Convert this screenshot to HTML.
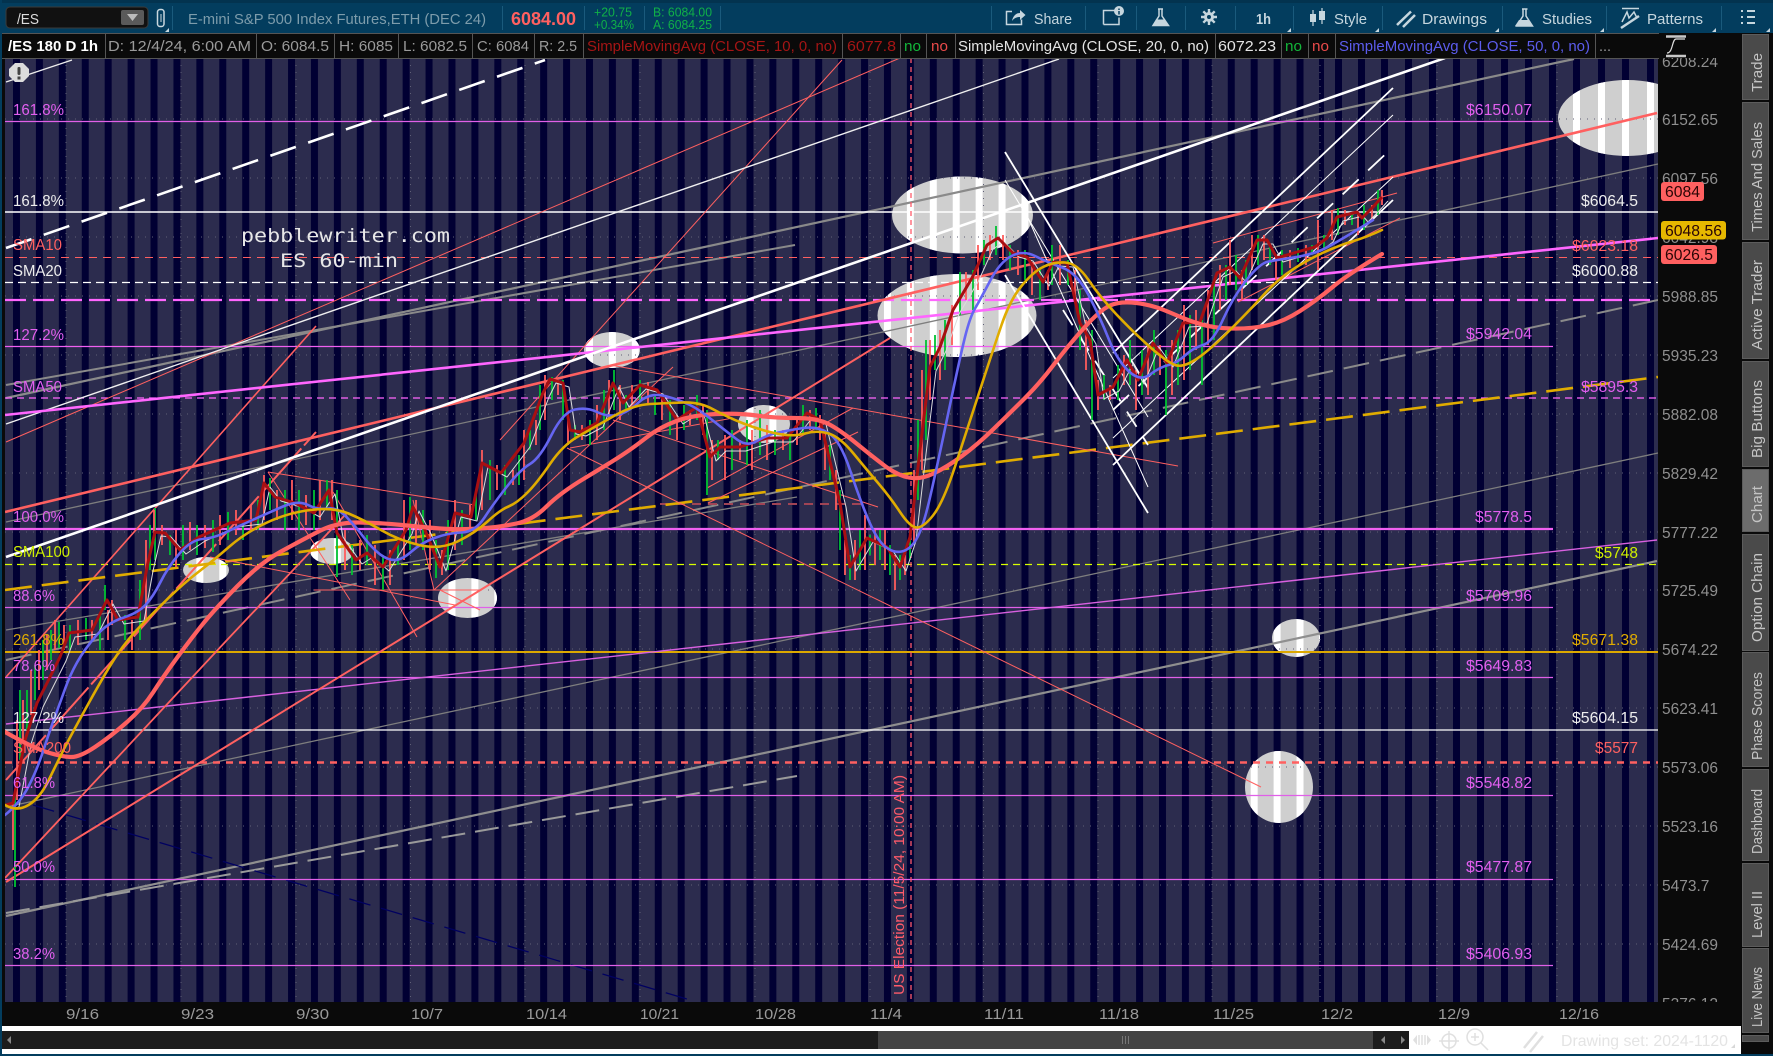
<!DOCTYPE html>
<html>
<head>
<meta charset="utf-8">
<title>/ES chart</title>
<style>
html,body{margin:0;padding:0;background:#033b5a;width:1773px;height:1056px;overflow:hidden}
svg{display:block;position:absolute;left:0;top:0}
text{font-family:"Liberation Sans","DejaVu Sans",sans-serif}
.m{font-size:15.5px;fill:#e25ff0}
.w{font-size:15.5px;fill:#eee}
.r{font-size:15.5px;fill:#ff6060}
.a{font-size:15.5px;fill:#8f8f8f}
.l{font-size:14.5px;fill:#9a9a9a}
.d{font-size:15px;fill:#9a9a9a}
.t{font-size:15px;fill:#c6d6de}
.v{font-size:15px;fill:#c4c4c4}
.tag{font-size:15.5px;fill:#2b0505}
</style>
</head>
<body>
<svg xmlns="http://www.w3.org/2000/svg" width="1773" height="1056" viewBox="0 0 1773 1056">
<defs>
<pattern id="pn" x="13" y="0" width="22.92" height="20" patternUnits="userSpaceOnUse"><rect width="7" height="20" fill="#010033"/></pattern>
<pattern id="pw" x="13" y="0" width="22.92" height="20" patternUnits="userSpaceOnUse"><rect width="7" height="20" fill="#fff"/></pattern>
<path id="rs" d="M1319 58h5v944h-5zM1335 58h7v944h-7zM1358 58h7v944h-7zM1381 58h7v944h-7zM1405 58h7v944h-7zM1429 58h7v944h-7zM1453 58h7v944h-7zM1477 58h7v944h-7zM1501 58h7v944h-7zM1525 58h7v944h-7zM1549 58h7v944h-7zM1573 58h7v944h-7zM1598 58h7v944h-7zM1622 58h7v944h-7zM1647 58h7v944h-7z"/>
<clipPath id="cc"><rect x="5" y="58" width="1653" height="944"/></clipPath>
<clipPath id="ce">
<ellipse cx="962.5" cy="215" rx="70.5" ry="38.5"/>
<ellipse cx="957" cy="315.5" rx="79.5" ry="41.5"/>
<ellipse cx="1627" cy="118" rx="69" ry="38"/>
<ellipse cx="612" cy="350" rx="28" ry="18"/>
<ellipse cx="764" cy="424" rx="26" ry="19"/>
<ellipse cx="206" cy="570" rx="23" ry="13"/>
<ellipse cx="332" cy="551" rx="22" ry="13"/>
<ellipse cx="467.5" cy="598" rx="29.5" ry="20"/>
<ellipse cx="1296" cy="638" rx="24" ry="19"/>
<ellipse cx="1279" cy="787" rx="34" ry="36"/>
</clipPath>
<polyline id="dr" fill="none" stroke-linejoin="round" points="6,805 13,803 25,740 37,703 60,657 69,633 92,630 107,600 118,620 138,617 147,567 155,532 165,533 180,550 199,537 230,523 256,520 264,483 275,497 295,503 314,513 329,490 337,533 356,560 367,553 383,567 406,530 413,507 425,530 440,567 455,513 471,517 482,463 501,473 524,443 543,393 550,379 563,383 570,430 580,432 597,423 613,383 623,403 640,385 657,390 677,420 697,407 710,457 720,447 740,447 767,438 787,438 807,413 820,420 840,503 850,567 867,538 887,547 900,567 910,537 920,450 930,367 940,347 953,310 972,278 987,245 998,238 1013,253 1027,257 1043,282 1053,262 1067,263 1080,323 1090,340 1098,395 1113,387 1127,360 1138,380 1153,343 1167,363 1183,323 1200,322 1217,273 1230,267 1240,278 1257,240 1267,240 1277,258 1297,252 1315,247 1327,238 1337,217 1357,212 1362,218 1373,207 1382,197"/>
</defs>

<!-- base -->
<rect width="1773" height="1056" fill="#033b5a"/>
<rect x="2" y="33" width="1771" height="993" fill="#0a0a0a"/>

<!-- chart background -->
<rect x="5" y="58" width="1653" height="944" fill="#2c2c4e"/>
<rect x="5" y="58" width="1305" height="944" fill="url(#pn)"/>
<use href="#rs" fill="#010033"/>

<g clip-path="url(#cc)">
<!-- ellipses -->
<g clip-path="url(#ce)">
<rect x="5" y="58" width="1653" height="944" fill="#cfcfcf"/>
<rect x="5" y="58" width="1305" height="944" fill="url(#pw)"/>
<use href="#rs" fill="#fff"/>
</g>

<!-- grid -->
<g stroke="#5f5f76" stroke-width="1" stroke-dasharray="1 6" fill="none">
<path d="M5 119H1658M5 178H1658M5 237H1658M5 296H1658M5 355H1658M5 414H1658M5 473H1658M5 532H1658M5 590H1658M5 649H1658M5 708H1658M5 767H1658M5 826H1658M5 885H1658M5 944H1658"/>
<path d="M66 58V1002M181 58V1002M296 58V1002M410.5 58V1002M525 58V1002M640 58V1002M755 58V1002M870 58V1002M983.5 58V1002M1098 58V1002M1212 58V1002M1320 58V1002M1437 58V1002M1557 58V1002"/>
</g>

<!-- thin gray / long lines -->
<g fill="none">
<path d="M6 522L1658 164" stroke="#7e7e7e" stroke-width="1.3"/>
<path d="M6 807L1658 453" stroke="#7e7e7e" stroke-width="1.3"/>
<path d="M6 630L797 497" stroke="#7e7e7e" stroke-width="1.3"/>
<path d="M6 398L1574 59" stroke="#8a8a8a" stroke-width="2.2"/>
<path d="M6 385L795 245" stroke="#8a8a8a" stroke-width="2"/>
<path d="M6 916L1657 561" stroke="#8f8f8f" stroke-width="2.2"/>
<path d="M6 660L1658 300" stroke="#8a8a8a" stroke-width="2" stroke-dasharray="26 11"/>
<path d="M6 913L797 776" stroke="#9a9a9a" stroke-width="2" stroke-dasharray="24 10"/>
<path d="M33 805L697 1002" stroke="#000060" stroke-width="1.3" stroke-dasharray="22 11"/>

<!-- horizontal levels -->
<path d="M5 121.5H1553" stroke="#e060e8" stroke-width="1.2"/>
<path d="M5 212H1658" stroke="#fff" stroke-width="1.5"/>
<path d="M5 257.5H1658" stroke="#ff6060" stroke-width="1" stroke-dasharray="8 6"/>
<path d="M5 282.5H1658" stroke="#fff" stroke-width="1.2" stroke-dasharray="8 5"/>
<path d="M5 300H1650" stroke="#ff66ff" stroke-width="2.2" stroke-dasharray="21 7"/>
<path d="M5 346.5H1553" stroke="#f060f0" stroke-width="1.3"/>
<path d="M5 398H1658" stroke="#ff66ff" stroke-width="1.2" stroke-dasharray="7 5"/>
<path d="M5 529H1553" stroke="#f060f0" stroke-width="2.2"/>
<path d="M5 564.5H1658" stroke="#d8ff00" stroke-width="1.2" stroke-dasharray="7 5"/>
<path d="M5 607.5H1553" stroke="#e060e8" stroke-width="1.2"/>
<path d="M5 652H1658" stroke="#dca800" stroke-width="2"/>
<path d="M5 677.5H1553" stroke="#e060e8" stroke-width="1.2"/>
<path d="M5 730H1658" stroke="#fff" stroke-width="1.3"/>
<path d="M5 762.5H1658" stroke="#ff6060" stroke-width="2.6" stroke-dasharray="7 6"/>
<path d="M5 795.5H1553" stroke="#e060e8" stroke-width="1.2"/>
<path d="M5 879.5H1553" stroke="#e060e8" stroke-width="1.2"/>
<path d="M5 965.5H1553" stroke="#e060e8" stroke-width="1.2"/>
<path d="M911 58V1002" stroke="#ff5a6a" stroke-width="1.3" stroke-dasharray="5 4"/>
<path d="M660 504H867" stroke="#a04455" stroke-width="2" stroke-dasharray="9 7"/>

<!-- long diagonal lines -->
<path d="M6 724L1657 540" stroke="#d860e0" stroke-width="1.4"/>
<path d="M6 442L900 58" stroke="#ff6060" stroke-width="1"/>
<path d="M842 60L500 440" stroke="#ff6060" stroke-width="1"/>
<path d="M6 424L1059 59" stroke="#f0f0f0" stroke-width="1.4"/>
<path d="M6 677L316 326" stroke="#ff6060" stroke-width="1.6"/>
<path d="M6 780L316 432" stroke="#ff6060" stroke-width="2" stroke-dasharray="60 4"/>
<path d="M5 878L227 640L345 515" stroke="#ff6060" stroke-width="1.8"/>
<path d="M6 882L890 338" stroke="#ff6060" stroke-width="2"/>
<path d="M5 512L1657 113" stroke="#ff6060" stroke-width="2.6"/>
<path d="M5 415L1658 238" stroke="#ff66ff" stroke-width="2.6"/>
<path d="M5 590L1658 377" stroke="#e0ac00" stroke-width="2.6" stroke-dasharray="27 10"/>
<path d="M6 557L1445 58" stroke="#fff" stroke-width="2.6"/>
<path d="M6 248L545 60" stroke="#fff" stroke-width="2.6" stroke-dasharray="27 13"/>
<path d="M6 82L72 60" stroke="#eee" stroke-width="1.2"/>

<!-- thin salmon fan -->
<g stroke="#ff6060" stroke-width="1">
<path d="M610 365L1178 466"/>
<path d="M613 420L878 507"/>
<path d="M567 448L1261 787"/>
<path d="M707 488L853 408"/>
<path d="M708 503L858 432"/>
<path d="M570 448L733 418"/>
<path d="M268 472L475 505"/>
<path d="M333 492L417 637"/>
<path d="M210 557L455 605"/>
<path d="M314 590H482"/>
<path d="M434 590L413 500"/>
<path d="M434 590L673 367"/>
<path d="M268 472L350 600"/>
<path d="M440 590L480 610"/>
<path d="M1213 243L1397 193"/>
<path d="M1238 302L1400 218"/>
</g>

<!-- white channels -->
<g stroke="#fff">
<path d="M1005 152L1148 388" stroke-width="1.8"/>
<path d="M1005 180L1148 417" stroke-width="1"/>
<path d="M1005 275L1148 513" stroke-width="1.8"/>
<path d="M1028 218L1148 487" stroke-width="1"/>
<path d="M1063 310L1148 445" stroke-width="1.8" stroke-dasharray="18 12"/>
<path d="M1113 353L1393 88" stroke-width="1.8"/>
<path d="M1113 378L1393 115" stroke-width="1"/>
<path d="M1113 410L1392 148" stroke-width="1.8" stroke-dasharray="22 13"/>
<path d="M1113 438L1393 177" stroke-width="1"/>
<path d="M1113 465L1393 200" stroke-width="1.8"/>
</g>
</g>

<!-- candles green -->
<path fill="none" stroke="#00c232" stroke-width="1.8" d="M15 887V790M20 760V690M27 730V690M35 700V665M43 680V640M51 660V630M59 648V622M70 650V625M86 640V618M100 650V615M105 610V585M125 640V615M140 640V580M150 570V525M155 508V560M170 535V555M183 525V560M197 525V555M213 520V552M228 512V540M243 520V540M258 500V530M270 478V510M285 490V530M299 490V530M314 490V530M327 480V510M337 490V577M352 545V575M367 535V565M383 555V590M398 540V565M410 497V550M423 510V550M436 540V578M448 520V570M462 510V545M476 490V520M490 460V500M505 465V495M519 455V485M530 430V450M540 385V430M552 377V400M563 380V420M575 425V440M590 420V445M604 390V430M614 370V410M626 395V410M640 380V400M655 395V415M670 400V435M684 405V430M697 395V420M707 410V495M718 440V460M732 430V470M747 420V465M760 410V455M775 430V455M790 435V460M803 405V435M816 408V430M830 445V480M840 490V550M850 555V580M860 530V570M870 535V555M880 530V560M890 545V575M900 555V580M910 530V560M918 420V500M926 340V440M935 335V370M945 320V370M960 272V315M973 270V310M984 240V265M996 226V255M1010 245V270M1025 250V280M1040 270V300M1052 245V285M1068 260V285M1080 290V350M1092 330V420M1104 375V400M1118 365V400M1130 340V385M1142 350V395M1154 330V375M1166 350V415M1178 330V385M1190 315V370M1202 320V385M1214 280V340M1226 265V300M1236 255V290M1246 260V285M1258 235V265M1270 245V265M1282 250V275M1298 248V262M1312 245V255M1324 235V250M1338 208V235M1352 212V225M1364 205V230M1378 190V215"/>
<!-- candles red -->
<path fill="none" stroke="#ff5c5c" stroke-width="1.8" d="M13 850V800M17 800V720M23 740V700M31 715V670M39 690V650M47 670V635M55 650V620M64 650V625M78 645V620M92 640V620M108 640V610M112 625V600M132 650V620M146 620V540M154 540V510M162 525V545M176 530V567M190 522V550M205 525V548M220 515V545M236 510V535M251 505V530M264 475V520M277 490V520M292 480V520M306 495V525M320 480V520M332 480V520M345 530V570M360 540V570M375 545V585M390 550V585M404 500V560M416 500V545M430 520V570M442 550V575M455 500V550M470 505V530M482 450V510M497 465V490M513 470V485M524 430V480M536 420V445M545 375V420M558 380V395M568 410V445M582 425V440M597 405V440M609 380V420M620 385V420M632 385V405M648 382V405M662 395V420M677 415V440M690 410V425M703 405V435M712 440V480M725 435V480M740 440V460M752 430V470M767 425V460M783 430V450M797 420V445M810 410V430M820 415V440M825 430V470M836 470V510M845 540V575M855 540V580M865 515V570M875 530V565M885 530V570M895 555V590M905 555V575M914 470V545M922 370V470M930 340V400M940 330V380M952 305V345M966 272V300M978 245V290M990 235V260M1003 235V260M1018 250V275M1032 262V295M1048 270V290M1060 245V285M1075 270V300M1086 320V370M1098 380V410M1110 385V400M1124 355V385M1136 370V410M1148 345V395M1160 345V375M1172 340V395M1184 305V380M1196 310V350M1208 290V345M1220 265V310M1230 240V285M1242 270V300M1252 235V270M1264 235V260M1276 255V280M1290 250V268M1306 245V265M1318 220V270M1332 210V240M1345 210V225M1358 212V235M1372 205V220M1382 190V205"/>

<use href="#dr" stroke="#dcdcdc" stroke-width="1" transform="translate(6 4)"/>
<use href="#dr" stroke="#a80f12" stroke-width="3"/>
<path fill="none" stroke="#ff6060" stroke-width="4.2" stroke-linecap="round" d="M5 732Q33 748 48 752.5Q63 757 71.5 757Q80 757 95 747Q110 737 126.5 722.5Q143 708 153 692.5Q163 677 176.5 658.5Q190 640 202 625Q214 610 237 586.5Q260 563 281 551.5Q302 540 319.5 531Q337 522 360 522.5Q383 523 402 525Q421 527 440 528.5Q459 530 479.5 528.5Q500 527 516.5 523.5Q533 520 546.5 506.5Q560 493 585 478Q610 463 621.5 455.5Q633 448 646.5 437.5Q660 427 676.5 421Q693 415 716.5 414Q740 413 756.5 415.5Q773 418 795 418Q817 418 828.5 424Q840 430 856.5 443.5Q873 457 885 466Q897 475 908.5 477.5Q920 480 933.5 473.5Q947 467 962 456Q977 445 993.5 429Q1010 413 1025 398Q1040 383 1053.5 365Q1067 347 1083.5 328.5Q1100 310 1110 305.5Q1120 301 1136.5 303Q1153 305 1170 312.5Q1187 320 1200 324Q1213 328 1231.5 328.5Q1250 329 1266.5 325.5Q1283 322 1300 311Q1317 300 1332 287.5Q1347 275 1382 254"/>
<path fill="none" stroke="#6565f2" stroke-width="2.6" stroke-linecap="round" d="M5 815Q20 803 28.5 786.5Q37 770 43.5 750Q50 730 55 716.5Q60 703 65 689Q70 675 77 662.5Q84 650 95.5 636.5Q107 623 122.5 618Q138 613 145.5 605Q153 597 160.5 582Q168 567 179.5 553.5Q191 540 202.5 539Q214 538 225.5 532.5Q237 527 252.5 520Q268 513 283 506.5Q298 500 308 505Q318 510 327.5 508.5Q337 507 346.5 517Q356 527 363.5 537Q371 547 379 553.5Q387 560 394.5 560Q402 560 411.5 551.5Q421 543 434.5 538Q448 533 461.5 532.5Q475 532 484.5 517.5Q494 503 507 486.5Q520 470 530 464Q540 458 551.5 435Q563 412 575 409.5Q587 407 597 412Q607 417 617 415Q627 413 638.5 402.5Q650 392 665 396Q680 400 690 405Q700 410 713.5 421Q727 432 737 439.5Q747 447 757 441Q767 435 778.5 432.5Q790 430 803.5 428Q817 426 828.5 433Q840 440 850 470Q860 500 868.5 520Q877 540 885 546.5Q893 553 901.5 551.5Q910 550 916.5 539Q923 528 930 497.5Q937 467 948.5 412Q960 357 965 337Q970 317 975 308.5Q980 300 990 281Q1000 262 1011.5 256Q1023 250 1035 256Q1047 262 1062 267.5Q1077 273 1088.5 295Q1100 317 1108.5 338.5Q1117 360 1128.5 371Q1140 382 1150 374.5Q1160 367 1168.5 365Q1177 363 1185 355.5Q1193 348 1203 345Q1213 342 1223 319.5Q1233 297 1246.5 280Q1260 263 1268.5 261.5Q1277 260 1293.5 257.5Q1310 255 1321.5 250Q1333 245 1373 220"/>
<path fill="none" stroke="#e0ac00" stroke-width="2.6" stroke-linecap="round" d="M5 805Q17 812 28.5 805Q40 798 48.5 780.5Q57 763 63.5 750Q70 737 88.5 703.5Q107 670 117 655Q127 640 140 626.5Q153 613 168.5 598Q184 583 199 571.5Q214 560 229.5 546.5Q245 533 266 523Q287 513 310 510Q333 507 348.5 513.5Q364 520 381 530Q398 540 419 545Q440 550 457.5 541.5Q475 533 487.5 521.5Q500 510 508.5 506.5Q517 503 527 493Q537 483 550 464Q563 445 578 436.5Q593 428 613 416.5Q633 405 650 404Q667 403 683.5 402.5Q700 402 713.5 409.5Q727 417 743.5 423.5Q760 430 776.5 433.5Q793 437 805 433.5Q817 430 828.5 433.5Q840 437 853.5 453.5Q867 470 878.5 483.5Q890 497 900 512Q910 527 916.5 527.5Q923 528 933 515.5Q943 503 955 466.5Q967 430 980 390Q993 350 1001.5 325Q1010 300 1021.5 286Q1033 272 1043 267Q1053 262 1065 262.5Q1077 263 1088.5 280Q1100 297 1116.5 314.5Q1133 332 1150 347Q1167 362 1175 365Q1183 368 1196.5 359Q1210 350 1230 330Q1250 310 1263.5 295Q1277 280 1292 270Q1307 260 1323.5 252.5Q1340 245 1353.5 241Q1367 237 1382 230"/>

<!-- alert icon -->
<path d="M15 63h8l6 6v7l-6 6h-8l-6-6v-7z" fill="#dcdcdc"/>
<rect x="17.5" y="67" width="3" height="8" rx="1.2" fill="#444"/><rect x="17.5" y="76.5" width="3" height="3" fill="#444"/>

<!-- left labels -->
<text class="m" x="13" y="115" textLength="51" lengthAdjust="spacingAndGlyphs">161.8%</text>
<text class="w" x="13" y="206" textLength="51" lengthAdjust="spacingAndGlyphs">161.8%</text>
<text class="r" x="13" y="250" textLength="49" lengthAdjust="spacingAndGlyphs">SMA10</text>
<text class="w" x="13" y="276" textLength="49" lengthAdjust="spacingAndGlyphs">SMA20</text>
<text class="m" x="13" y="340" textLength="51" lengthAdjust="spacingAndGlyphs">127.2%</text>
<text class="m" x="13" y="392" textLength="49" lengthAdjust="spacingAndGlyphs">SMA50</text>
<text class="m" x="13" y="522" textLength="51" lengthAdjust="spacingAndGlyphs">100.0%</text>
<text x="13" y="557" textLength="57" lengthAdjust="spacingAndGlyphs" font-size="15.5" fill="#d0f000">SMA100</text>
<text class="m" x="13" y="601" textLength="42" lengthAdjust="spacingAndGlyphs">88.6%</text>
<text x="13" y="645" textLength="51" lengthAdjust="spacingAndGlyphs" font-size="15.5" fill="#e0ac00">261.8%</text>
<text class="m" x="13" y="671" textLength="42" lengthAdjust="spacingAndGlyphs">78.6%</text>
<text class="w" x="13" y="723" textLength="51" lengthAdjust="spacingAndGlyphs">127.2%</text>
<text class="r" x="13" y="753" textLength="58" lengthAdjust="spacingAndGlyphs">SMA200</text>
<text class="m" x="13" y="788" textLength="42" lengthAdjust="spacingAndGlyphs">61.8%</text>
<text class="m" x="13" y="872" textLength="42" lengthAdjust="spacingAndGlyphs">50.0%</text>
<text class="m" x="13" y="959" textLength="42" lengthAdjust="spacingAndGlyphs">38.2%</text>

<!-- right labels -->
<text class="m" x="1466" y="115" textLength="66" lengthAdjust="spacingAndGlyphs">$6150.07</text>
<text class="m" x="1466" y="339" textLength="66" lengthAdjust="spacingAndGlyphs">$5942.04</text>
<text class="m" x="1475" y="522" textLength="57" lengthAdjust="spacingAndGlyphs">$5778.5</text>
<text class="m" x="1466" y="601" textLength="66" lengthAdjust="spacingAndGlyphs">$5709.96</text>
<text class="m" x="1466" y="671" textLength="66" lengthAdjust="spacingAndGlyphs">$5649.83</text>
<text class="m" x="1466" y="788" textLength="66" lengthAdjust="spacingAndGlyphs">$5548.82</text>
<text class="m" x="1466" y="872" textLength="66" lengthAdjust="spacingAndGlyphs">$5477.87</text>
<text class="m" x="1466" y="959" textLength="66" lengthAdjust="spacingAndGlyphs">$5406.93</text>
<text class="w" x="1581" y="206" textLength="57" lengthAdjust="spacingAndGlyphs">$6064.5</text>
<text class="r" x="1572" y="251" textLength="66" lengthAdjust="spacingAndGlyphs">$6023.18</text>
<text class="w" x="1572" y="276" textLength="66" lengthAdjust="spacingAndGlyphs">$6000.88</text>
<text class="m" x="1581" y="392" textLength="57" lengthAdjust="spacingAndGlyphs">$5895.3</text>
<text x="1595" y="558" textLength="43" lengthAdjust="spacingAndGlyphs" font-size="15.5" fill="#d0f000">$5748</text>
<text x="1572" y="645" textLength="66" lengthAdjust="spacingAndGlyphs" font-size="15.5" fill="#e0ac00">$5671.38</text>
<text class="w" x="1572" y="723" textLength="66" lengthAdjust="spacingAndGlyphs">$5604.15</text>
<text class="r" x="1595" y="753" textLength="43" lengthAdjust="spacingAndGlyphs">$5577</text>

<!-- watermark text -->
<text x="241" y="242" textLength="209" lengthAdjust="spacingAndGlyphs" font-size="19" fill="#e8e8e8" style="font-family:'DejaVu Sans Mono','Liberation Mono',monospace">pebblewriter.com</text>
<text x="280" y="267" textLength="118" lengthAdjust="spacingAndGlyphs" font-size="19" fill="#e8e8e8" style="font-family:'DejaVu Sans Mono','Liberation Mono',monospace">ES 60-min</text>
<text transform="translate(904 995) rotate(-90)" textLength="220" lengthAdjust="spacingAndGlyphs" font-size="14.5" fill="#ff5a6a">US Election (11/5/24, 10:00 AM)</text>

<!-- chart borders -->
<path d="M4.5 58V1002.5H1658.5V58" fill="none" stroke="#6a6a6a" stroke-width="1"/>
</svg>

<svg xmlns="http://www.w3.org/2000/svg" width="1773" height="1056" viewBox="0 0 1773 1056">
<defs>
<clipPath id="ca"><rect x="1659" y="58" width="82" height="944"/></clipPath>
</defs>
<!-- price axis -->
<g clip-path="url(#ca)">
<text class="a" x="1662" y="67">6208.24</text>
<text class="a" x="1662" y="125">6152.65</text>
<text class="a" x="1662" y="184">6097.56</text>
<text class="a" x="1662" y="243">6042.98</text>
<text class="a" x="1662" y="302">5988.85</text>
<text class="a" x="1662" y="361">5935.23</text>
<text class="a" x="1662" y="420">5882.08</text>
<text class="a" x="1662" y="479">5829.42</text>
<text class="a" x="1662" y="538">5777.22</text>
<text class="a" x="1662" y="596">5725.49</text>
<text class="a" x="1662" y="655">5674.22</text>
<text class="a" x="1662" y="714">5623.41</text>
<text class="a" x="1662" y="773">5573.06</text>
<text class="a" x="1662" y="832">5523.16</text>
<text class="a" x="1662" y="891">5473.7</text>
<text class="a" x="1662" y="950">5424.69</text>
<text class="a" x="1662" y="1009">5376.12</text>
</g>
<rect x="1661" y="182" width="43" height="19" rx="3" fill="#ff6060"/>
<text class="tag" x="1665" y="197" textLength="35" lengthAdjust="spacingAndGlyphs">6084</text>
<rect x="1661" y="221" width="65" height="18.5" rx="3" fill="#e6b800"/>
<text class="tag" x="1665" y="236" textLength="57" lengthAdjust="spacingAndGlyphs">6048.56</text>
<rect x="1661" y="245" width="56" height="19" rx="3" fill="#ff6060"/>
<text class="tag" x="1665" y="260" textLength="48" lengthAdjust="spacingAndGlyphs">6026.5</text>

<!-- date axis -->
<text class="d" x="66" y="1019" textLength="33" lengthAdjust="spacingAndGlyphs">9/16</text>
<text class="d" x="181" y="1019" textLength="33" lengthAdjust="spacingAndGlyphs">9/23</text>
<text class="d" x="296" y="1019" textLength="33" lengthAdjust="spacingAndGlyphs">9/30</text>
<text class="d" x="411" y="1019" textLength="32" lengthAdjust="spacingAndGlyphs">10/7</text>
<text class="d" x="526" y="1019" textLength="41" lengthAdjust="spacingAndGlyphs">10/14</text>
<text class="d" x="640" y="1019" textLength="39" lengthAdjust="spacingAndGlyphs">10/21</text>
<text class="d" x="755" y="1019" textLength="41" lengthAdjust="spacingAndGlyphs">10/28</text>
<text class="d" x="870" y="1019" textLength="32" lengthAdjust="spacingAndGlyphs">11/4</text>
<text class="d" x="984" y="1019" textLength="40" lengthAdjust="spacingAndGlyphs">11/11</text>
<text class="d" x="1099" y="1019" textLength="40" lengthAdjust="spacingAndGlyphs">11/18</text>
<text class="d" x="1213" y="1019" textLength="41" lengthAdjust="spacingAndGlyphs">11/25</text>
<text class="d" x="1321" y="1019" textLength="32" lengthAdjust="spacingAndGlyphs">12/2</text>
<text class="d" x="1438" y="1019" textLength="32" lengthAdjust="spacingAndGlyphs">12/9</text>
<text class="d" x="1559" y="1019" textLength="40" lengthAdjust="spacingAndGlyphs">12/16</text>

<!-- bottom strip -->
<rect x="2" y="1026" width="1739" height="28" fill="#fff"/>
<rect x="2" y="1031" width="1407" height="18" fill="#1c1c1c"/>
<rect x="878" y="1031" width="495" height="18" fill="#444"/>
<path d="M1122.5 1036v8M1125.5 1036v8M1128.5 1036v8" stroke="#777" stroke-width="1"/>
<path d="M7 1040l4-4v8zM1381 1040l4-4v8zM1401 1036l4 4-4 4z" fill="#888"/>
<g fill="none" stroke="#e0e0e0" stroke-width="1.5">
<path d="M1413 1040l4-5v10zM1431 1040l-4-5v10z" fill="#e0e0e0" stroke="none"/>
<path d="M1419 1035v10M1422 1035v10M1425 1035v10"/>
<circle cx="1449" cy="1041" r="7"/><path d="M1449 1031v20M1439 1041h20"/>
<circle cx="1475" cy="1037" r="8"/><path d="M1481 1043l7 7M1475 1033v8M1471 1037h8"/>
<path d="M1524 1048l13-16M1530 1052l13-16" stroke-width="2.5"/>
</g>
<text x="1561" y="1046" font-size="16" fill="#e4e4e4" textLength="167" lengthAdjust="spacingAndGlyphs">Drawing set: 2024-1120</text>
<path d="M1731 1048l4-4v4z" fill="#d8d8d8"/>

<!-- right tabs -->
<rect x="1741" y="33" width="32" height="1021" fill="#0a0a0a"/>
<g fill="#4a4a4a" stroke="#5c5c5c" stroke-width="1">
<rect x="1742.5" y="34.5" width="26" height="65"/>
<rect x="1742.5" y="102.5" width="26" height="137"/>
<rect x="1742.5" y="242.5" width="26" height="116"/>
<rect x="1742.5" y="361.5" width="26" height="105"/>
<rect x="1742.5" y="469.5" width="26" height="62" fill="#6c6c6c"/>
<rect x="1742.5" y="534.5" width="26" height="116"/>
<rect x="1742.5" y="652.5" width="26" height="114"/>
<rect x="1742.5" y="769.5" width="26" height="91"/>
<rect x="1742.5" y="863.5" width="26" height="83"/>
<rect x="1742.5" y="948.5" width="26" height="84"/>
<rect x="1742.5" y="1035.5" width="26" height="6"/>
</g>
<text class="v" transform="translate(1762 92) rotate(-90)" textLength="39" lengthAdjust="spacingAndGlyphs">Trade</text>
<text class="v" transform="translate(1762 232) rotate(-90)" textLength="110" lengthAdjust="spacingAndGlyphs">Times And Sales</text>
<text class="v" transform="translate(1762 350) rotate(-90)" textLength="90" lengthAdjust="spacingAndGlyphs">Active Trader</text>
<text class="v" transform="translate(1762 458) rotate(-90)" textLength="78" lengthAdjust="spacingAndGlyphs">Big Buttons</text>
<text class="v" transform="translate(1762 523) rotate(-90)" textLength="37" lengthAdjust="spacingAndGlyphs">Chart</text>
<text class="v" transform="translate(1762 642) rotate(-90)" textLength="89" lengthAdjust="spacingAndGlyphs">Option Chain</text>
<text class="v" transform="translate(1762 760) rotate(-90)" textLength="88" lengthAdjust="spacingAndGlyphs">Phase Scores</text>
<text class="v" transform="translate(1762 854) rotate(-90)" textLength="65" lengthAdjust="spacingAndGlyphs">Dashboard</text>
<text class="v" transform="translate(1762 938) rotate(-90)" textLength="47" lengthAdjust="spacingAndGlyphs">Level II</text>
<text class="v" transform="translate(1762 1027) rotate(-90)" textLength="60" lengthAdjust="spacingAndGlyphs">Live News</text>

<!-- legend row -->
<rect x="2" y="33" width="1657" height="25" fill="#0a0a0a"/>
<path d="M2 33.5H1659M2 58.5H1659" stroke="#555" stroke-width="1"/>
<path d="M105.5 33V58M256.5 33V58M334.5 33V58M398.5 33V58M472.5 33V58M534.5 33V58M583.5 33V58M842.5 33V58M900.5 33V58M926.5 33V58M955.5 33V58M1215.5 33V58M1281.5 33V58M1308.5 33V58M1335.5 33V58M1595.5 33V58" stroke="#555" stroke-width="1"/>
<text x="8" y="51" font-size="15" font-weight="bold" fill="#fff" textLength="90" lengthAdjust="spacingAndGlyphs">/ES 180 D 1h</text>
<text class="l" x="108" y="51" textLength="143" lengthAdjust="spacingAndGlyphs">D: 12/4/24, 6:00 AM</text>
<text class="l" x="261" y="51" textLength="68" lengthAdjust="spacingAndGlyphs">O: 6084.5</text>
<text class="l" x="339" y="51" textLength="54" lengthAdjust="spacingAndGlyphs">H: 6085</text>
<text class="l" x="403" y="51" textLength="64" lengthAdjust="spacingAndGlyphs">L: 6082.5</text>
<text class="l" x="477" y="51" textLength="52" lengthAdjust="spacingAndGlyphs">C: 6084</text>
<text class="l" x="539" y="51" textLength="38" lengthAdjust="spacingAndGlyphs">R: 2.5</text>
<text x="587" y="51" font-size="14.5" fill="#a51515" textLength="250" lengthAdjust="spacingAndGlyphs">SimpleMovingAvg (CLOSE, 10, 0, no)</text>
<text x="847" y="51" font-size="14.5" fill="#a51515" textLength="49" lengthAdjust="spacingAndGlyphs">6077.8</text>
<text x="904" y="51" font-size="14.5" fill="#13b53a" textLength="17" lengthAdjust="spacingAndGlyphs">no</text>
<text x="931" y="51" font-size="14.5" fill="#e84a4a" textLength="17" lengthAdjust="spacingAndGlyphs">no</text>
<text x="958" y="51" font-size="14.5" fill="#e4e4e4" textLength="251" lengthAdjust="spacingAndGlyphs">SimpleMovingAvg (CLOSE, 20, 0, no)</text>
<text x="1218" y="51" font-size="14.5" fill="#e4e4e4" textLength="58" lengthAdjust="spacingAndGlyphs">6072.23</text>
<text x="1285" y="51" font-size="14.5" fill="#13b53a" textLength="17" lengthAdjust="spacingAndGlyphs">no</text>
<text x="1312" y="51" font-size="14.5" fill="#e84a4a" textLength="17" lengthAdjust="spacingAndGlyphs">no</text>
<text x="1339" y="51" font-size="14.5" fill="#5c5cee" textLength="251" lengthAdjust="spacingAndGlyphs">SimpleMovingAvg (CLOSE, 50, 0, no)</text>
<text class="l" x="1599" y="51">...</text>
<!-- axis toggle icon -->
<path d="M1666 36.5h20M1666 56h20" stroke="#c8c8c8" stroke-width="2.5"/>
<path d="M1667 53c6 0 5-14 9-14s3 0 9 0" fill="none" stroke="#ddd" stroke-width="1.2"/>

<!-- top toolbar -->
<rect x="0" y="0" width="1773" height="33" fill="#033d5e"/>
<rect x="0" y="0" width="1773" height="3" fill="#03334f"/>
<rect x="6" y="7" width="142" height="21" rx="4" fill="#111" stroke="#3a3a3a"/>
<text x="17" y="24" font-size="15" fill="#ddd" textLength="22" lengthAdjust="spacingAndGlyphs">/ES</text>
<rect x="121" y="10" width="23" height="15" rx="2" fill="#5a5a5a"/>
<path d="M127 14h11l-5.5 7z" fill="#bdbdbd"/>
<rect x="157.5" y="9.5" width="6.5" height="17" rx="2.5" fill="none" stroke="#c9d7de" stroke-width="1.5"/>
<path d="M161 14v8" stroke="#c9d7de" stroke-width="1"/>
<path d="M165 32l4-4v4z" fill="#c6d6de"/>
<path d="M172.5 6V30M502.5 6V30M584.5 6V30M644.5 6V30M720.5 6V30M991.5 6V30M1085.5 6V30M1136.5 6V30M1185.5 6V30M1235.5 6V30M1293.5 6V30M1382.5 6V30M1502.5 6V30M1606.5 6V30M1721.5 6V30" stroke="#1a5a7c" stroke-width="1"/>
<text x="188" y="24" font-size="15" fill="#7d9cab" textLength="298" lengthAdjust="spacingAndGlyphs">E-mini S&amp;P 500 Index Futures,ETH (DEC 24)</text>
<text x="511" y="25" font-size="18" font-weight="bold" fill="#ff6060" textLength="65" lengthAdjust="spacingAndGlyphs">6084.00</text>
<text x="594" y="16.5" font-size="13" fill="#10b048" textLength="38" lengthAdjust="spacingAndGlyphs">+20.75</text>
<text x="594" y="29" font-size="13" fill="#10b048" textLength="40" lengthAdjust="spacingAndGlyphs">+0.34%</text>
<text x="653" y="16.5" font-size="13" fill="#10b048" textLength="59" lengthAdjust="spacingAndGlyphs">B: 6084.00</text>
<text x="653" y="29" font-size="13" fill="#10b048" textLength="59" lengthAdjust="spacingAndGlyphs">A: 6084.25</text>

<!-- toolbar icons -->
<g fill="none" stroke="#c6d6de" stroke-width="1.5">
<path d="M1012 11.5h-5.500v13h15v-5"/>
<path d="M1103.5 24.5v-14h13M1103.5 24.5h15.500v-7"/>
<path d="M1158 9h5M1159 9v7l-6 9.5h15.500l-6.500-9.500v-7"/>
<path d="M1411 11.5l-14 13.500M1415 15l-12 12" stroke-width="2.5"/>
<path d="M1522 9h5.500M1523 9v7l-6.500 10h16l-6.500-10v-7"/>
<path d="M1622 8.5h17M1622 22l5-10 2 6 5-6 3 6" stroke-width="1.5"/>
<path d="M1621 28l18-12" stroke-width="2.5"/>
<path d="M1741 11h2M1747 11h8M1741 17h2M1747 17h8M1741 23h2M1747 23h8" stroke-width="2"/>
</g>
<path d="M1209 9v16M1201 17h16M1203.3 11.3l11.4 11.4M1214.7 11.3l-11.4 11.4" stroke="#c6d6de" stroke-width="2.4"/>
<circle cx="1209" cy="17" r="5" fill="#c6d6de"/>
<circle cx="1209" cy="17" r="2" fill="#033d5e"/>
<path d="M1012 21c1-5 4-8 8-8v-3l5.500 5-5.500 5v-3c-3 0-6 1-8 4z" fill="#c6d6de"/>
<circle cx="1119" cy="11" r="5" fill="#c6d6de"/>
<path d="M1119 8.5v1.5M1119 11v3.5" stroke="#033d5e" stroke-width="1.5"/>
<path d="M1156 19.5h9l3.500 6h-16z" fill="#c6d6de"/>
<path d="M1519 20h9l4 6h-17z" fill="#c6d6de"/>
<path d="M1313 10v16M1322 8v16" stroke="#c6d6de" stroke-width="1.2"/>
<rect x="1310" y="14" width="6" height="8" fill="#c6d6de"/><rect x="1319" y="11" width="6" height="9" fill="#c6d6de"/>
<path fill="#c6d6de" d="M1287 32l4-4v4zM1375 32l4-4v4zM1495 32l4-4v4zM1600 32l4-4v4zM1712 32l4-4v4zM1766 32l4-4v4z"/>
<text class="t" x="1034" y="24" textLength="38" lengthAdjust="spacingAndGlyphs">Share</text>
<text x="1256" y="24" font-size="15" font-weight="bold" fill="#c6d6de" textLength="15" lengthAdjust="spacingAndGlyphs">1h</text>
<text class="t" x="1334" y="24" textLength="33" lengthAdjust="spacingAndGlyphs">Style</text>
<text class="t" x="1422" y="24" textLength="65" lengthAdjust="spacingAndGlyphs">Drawings</text>
<text class="t" x="1542" y="24" textLength="50" lengthAdjust="spacingAndGlyphs">Studies</text>
<text class="t" x="1647" y="24" textLength="56" lengthAdjust="spacingAndGlyphs">Patterns</text>

<!-- frame edges -->
<rect x="0" y="0" width="2" height="1056" fill="#033d5e"/>
<rect x="0" y="1054" width="1773" height="2" fill="#033d5e"/>
</svg>
</body>
</html>
